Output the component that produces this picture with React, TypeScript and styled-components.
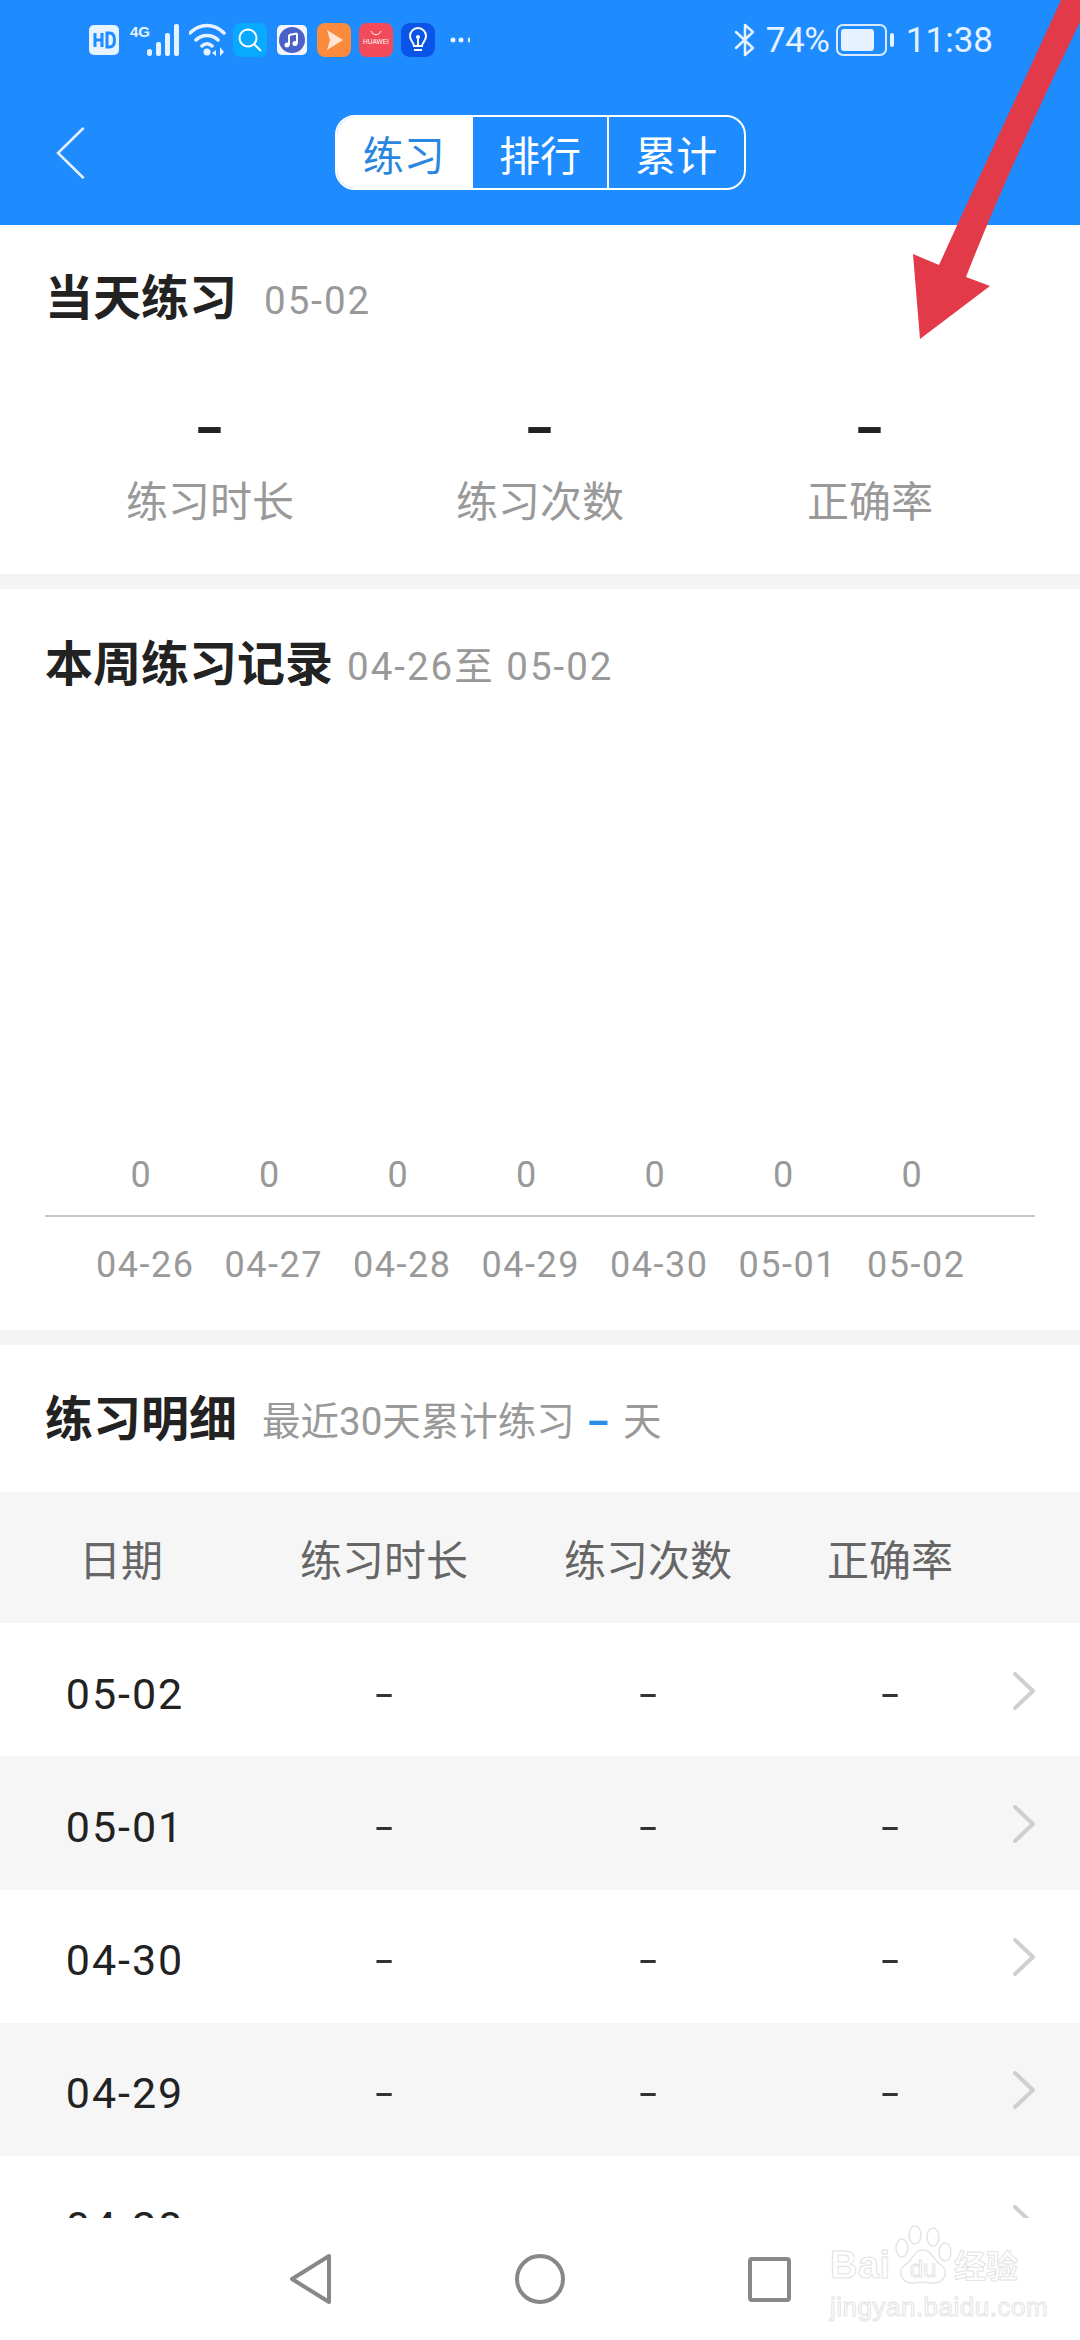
import { createGlobalStyle, styled } from 'styled-components'

const FONT = `Roboto, "Noto Sans CJK SC", sans-serif`

const GlobalStyle = createGlobalStyle`
  html, body {
    margin: 0;
    padding: 0;
    background: #fff;
  }
  * {
    box-sizing: border-box;
  }
`

const WEEK = [
  { date: '04-26', count: 0 },
  { date: '04-27', count: 0 },
  { date: '04-28', count: 0 },
  { date: '04-29', count: 0 },
  { date: '04-30', count: 0 },
  { date: '05-01', count: 0 },
  { date: '05-02', count: 0 },
]

const DETAIL_ROWS = ['05-02', '05-01', '04-30', '04-29', '04-28']

const StatusIcons = () => (
  <StatusLeft>
    <Glyph width="30" height="30" viewBox="0 0 30 30" $mr={11}>
      <rect width="30" height="30" rx="5" fill="#e6f2ff" />
      <path d="M6 8v14M13 8v14M6 15h7" stroke="#1e8cff" strokeWidth="3" fill="none" />
      <path d="M18 8v14h2.500c3.500 0 5-2.500 5-7s-1.500-7-5-7z" stroke="#1e8cff" strokeWidth="3" fill="none" />
    </Glyph>
    <Glyph width="50" height="34" viewBox="0 0 50 34" $mr={9}>
      <text x="0" y="14" fontFamily="'Liberation Sans Narrow', 'Liberation Sans', sans-serif" fontWeight="700" fontSize="15" fill="#e6f2ff">
        4G
      </text>
      <rect x="17" y="26" width="5" height="7" rx="2.500" fill="#e6f2ff" />
      <rect x="26" y="19" width="5" height="14" rx="2" fill="#e6f2ff" />
      <rect x="35" y="10" width="5" height="23" rx="2" fill="#e6f2ff" />
      <rect x="44" y="1" width="5" height="32" rx="2" fill="#e6f2ff" />
    </Glyph>
    <Glyph width="37" height="34" viewBox="0 0 37 34" $mr={7}>
      <path d="M1 10c10-10 24-10 34 0M7 17c6-6 16-6 22 0M13 23c3-3 7-3 10 0" stroke="#e6f2ff" strokeWidth="3.500" fill="none" strokeLinecap="round" />
      <circle cx="18" cy="29" r="3.500" fill="#e6f2ff" />
      <path d="M27 27l-4 3 4 3zM31 24v9l4-4z" fill="#e6f2ff" />
    </Glyph>
    <Glyph width="34" height="34" viewBox="0 0 34 34" $mr={10}>
      <rect width="34" height="34" rx="8" fill="#08aaff" />
      <circle cx="15" cy="15" r="8.500" stroke="#fff" strokeWidth="2" fill="none" />
      <path d="M21 21l7 7" stroke="#fff" strokeWidth="2" />
    </Glyph>
    <Glyph width="30" height="30" viewBox="0 0 30 30" $mr={10}>
      <rect width="30" height="30" rx="5" fill="#f4f6ff" />
      <circle cx="15" cy="15" r="13" fill="#4a62c8" />
      <path d="M12 10v10M20 8.500v10M12 10l8-1.500" stroke="#fff" strokeWidth="2" fill="none" />
      <circle cx="10" cy="20" r="2.500" fill="#fff" />
      <circle cx="18" cy="18.500" r="2.500" fill="#fff" />
    </Glyph>
    <Glyph width="34" height="34" viewBox="0 0 34 34" $mr={8}>
      <rect width="34" height="34" rx="8" fill="#fb8a3c" />
      <path d="M10 7l16 10-16 10 3-10z" fill="#ffe6d4" />
    </Glyph>
    <Glyph width="34" height="34" viewBox="0 0 34 34" $mr={8}>
      <rect width="34" height="34" rx="8" fill="#f24a58" />
      <path d="M12 8c2 5 8 5 10 0" stroke="#fff" strokeWidth="1" fill="none" />
      <text x="17" y="21" textAnchor="middle" fontFamily="'Liberation Sans', sans-serif" fontSize="6.500" fill="#fff">
        HUAWEI
      </text>
    </Glyph>
    <Glyph width="34" height="34" viewBox="0 0 34 34" $mr={15}>
      <rect width="34" height="34" rx="9" fill="#0a55e8" />
      <path d="M13 23c0-3-4-5-4-10a8 8 0 0 1 16 0c0 5-4 7-4 10z" stroke="#fff" strokeWidth="2" fill="none" />
      <path d="M17 23v-7M13 27h8" stroke="#fff" strokeWidth="2" fill="none" />
      <circle cx="17" cy="14" r="2" fill="#fff" />
    </Glyph>
    <Glyph width="20" height="8" viewBox="0 0 20 8" $mr={0}>
      <circle cx="3" cy="4" r="2.500" fill="#e6f2ff" />
      <circle cx="11" cy="4" r="2.500" fill="#e6f2ff" />
      <rect x="18" y="1.500" width="2" height="5" rx="1" fill="#e6f2ff" />
    </Glyph>
  </StatusLeft>
)

const StatusInfo = () => (
  <StatusRight>
    <Glyph width="22" height="34" viewBox="0 0 22 34" $mr={10}>
      <path d="M2 9l17 16-8 7V2l8 7L2 25" stroke="#e6f2ff" strokeWidth="2.500" fill="none" strokeLinejoin="round" strokeLinecap="round" />
    </Glyph>
    <BatteryText>74%</BatteryText>
    <Glyph width="58" height="32" viewBox="0 0 58 32" $mr={12}>
      <rect x="1" y="1" width="49" height="30" rx="6" stroke="#d8ebff" strokeWidth="2" fill="none" />
      <rect x="5" y="5" width="33" height="22" rx="3" fill="#e6f2ff" />
      <rect x="54" y="9" width="4" height="14" rx="2" fill="#e6f2ff" />
    </Glyph>
    <Clock>11:38</Clock>
  </StatusRight>
)

const Chevron = () => (
  <svg width="22" height="38" viewBox="0 0 22 38">
    <path d="M2 2l18 17L2 36" stroke="#cfcfcf" strokeWidth="4" fill="none" strokeLinecap="round" strokeLinejoin="round" />
  </svg>
)

export default function App() {
  return (
    <Page>
      <GlobalStyle />
      <Header>
        <StatusBar>
          <StatusIcons />
          <StatusInfo />
        </StatusBar>
        <TopBar>
          <BackIcon width="29" height="52" viewBox="0 0 29 52">
            <path d="M27 1.500L2 26l25 24.500" stroke="#e6f2ff" strokeWidth="2.500" fill="none" strokeLinecap="round" />
          </BackIcon>
          <Tabs>
            <Tab $active>练习</Tab>
            <Tab>排行</Tab>
            <Tab>累计</Tab>
          </Tabs>
        </TopBar>
      </Header>

      <Content>
        <Section $height={349}>
          <TitleRow $height={146} $gap={27}>
            <Title>当天练习</Title>
            <Sub $spacing={2} $drop={12}>
              05-02
            </Sub>
          </TitleRow>
          <Stats>
            <Stat>
              <StatValue>-</StatValue>
              <StatLabel>练习时长</StatLabel>
            </Stat>
            <Stat>
              <StatValue>-</StatValue>
              <StatLabel>练习次数</StatLabel>
            </Stat>
            <Stat>
              <StatValue>-</StatValue>
              <StatLabel>正确率</StatLabel>
            </Stat>
          </Stats>
        </Section>
        <Band />

        <Section $height={741}>
          <TitleRow $height={150} $gap={14}>
            <Title>本周练习记录</Title>
            <Sub $spacing={2} $drop={6}>
              04-26至 05-02
            </Sub>
          </TitleRow>
          <Chart>
            <ChartRow $left={77}>
              {WEEK.map((day) => (
                <ChartCell key={day.date}>{day.count}</ChartCell>
              ))}
            </ChartRow>
            <Axis />
            <ChartRow $left={81}>
              {WEEK.map((day) => (
                <ChartCell key={day.date}>{day.date}</ChartCell>
              ))}
            </ChartRow>
          </Chart>
        </Section>
        <Band />

        <Section>
          <TitleRow $height={147} $gap={25}>
            <Title>练习明细</Title>
            <Sub $drop={6}>
              最近30天累计练习 <Accent>-</Accent> 天
            </Sub>
          </TitleRow>
          <TableHead>
            <HeadCell $shift={-8}>日期</HeadCell>
            <HeadCell>练习时长</HeadCell>
            <HeadCell>练习次数</HeadCell>
            <HeadCell>正确率</HeadCell>
          </TableHead>
          {DETAIL_ROWS.map((date, index) => (
            <TableRow key={date} $striped={index % 2 === 1}>
              <DateCell>{date}</DateCell>
              <DashCell>-</DashCell>
              <DashCell>-</DashCell>
              <DashCell>-</DashCell>
              <ArrowCell>
                <Chevron />
              </ArrowCell>
            </TableRow>
          ))}
        </Section>
      </Content>

      <NavBar>
        <svg width="42" height="52" viewBox="0 0 42 52">
          <path d="M39 3L2 26l37 23z" stroke="#888" strokeWidth="4" fill="none" strokeLinejoin="round" />
        </svg>
        <svg width="50" height="50" viewBox="0 0 50 50">
          <circle cx="25" cy="25" r="23" stroke="#888" strokeWidth="4" fill="none" />
        </svg>
        <svg width="43" height="45" viewBox="0 0 43 45">
          <rect x="2" y="2" width="39" height="41" rx="2" stroke="#888" strokeWidth="4" fill="none" />
        </svg>
      </NavBar>

      <ArrowOverlay width="1080" height="350" viewBox="0 0 1080 350">
        <path
          d="M1061 0C1020 90 980 175 939 265L913 254 920 339 990 286 966 277C1000 190 1040 105 1080 22V0z"
          fill="#e23a48"
        />
      </ArrowOverlay>

      <Watermark>
        <BrandLine>
          <BrandWord>Bai</BrandWord>
          <PawIcon width="62" height="60" viewBox="0 0 62 60">
            <g stroke="#e4e4e4" strokeWidth="1.500" fill="none">
              <ellipse cx="23" cy="10" rx="6" ry="9" />
              <ellipse cx="41" cy="12" rx="6" ry="9" />
              <ellipse cx="10" cy="23" rx="6" ry="9" />
              <ellipse cx="53" cy="27" rx="6" ry="9" />
              <path d="M31 25c9 0 10 10 18 15 9 6 3 19-9 18-6 0-12-2-18 0C10 59 4 46 13 40c8-5 9-15 18-15z" />
            </g>
            <PawText x="31" y="52" textAnchor="middle">
              du
            </PawText>
          </PawIcon>
          <BrandCn>经验</BrandCn>
        </BrandLine>
        <BrandUrl>jingyan.baidu.com</BrandUrl>
      </Watermark>
    </Page>
  )
}

const Page = styled.div`
  position: relative;
  width: 1080px;
  height: 2340px;
  display: flex;
  flex-direction: column;
  overflow: hidden;
  background: #fff;
  font-family: ${FONT};
`

const Header = styled.header`
  height: 225px;
  flex-shrink: 0;
  background: #1e8cff;
  display: flex;
  flex-direction: column;
`

const StatusBar = styled.div`
  height: 80px;
  padding: 0 87px 0 89px;
  display: flex;
  align-items: center;
  justify-content: space-between;
`

const StatusLeft = styled.div`
  display: flex;
  align-items: center;
`

const StatusRight = styled.div`
  display: flex;
  align-items: center;
  color: #e6f2ff;
`

const Glyph = styled.svg<{ $mr: number }>`
  flex-shrink: 0;
  margin-right: ${(props) => props.$mr}px;
`

const BatteryText = styled.span`
  font-size: 35px;
  width: 70px;
  letter-spacing: -0.5px;
`

const Clock = styled.span`
  font-size: 35px;
`

const TopBar = styled.div`
  position: relative;
  height: 110px;
  padding-top: 35px;
  display: flex;
  justify-content: center;
  align-items: flex-start;
`

const BackIcon = styled.svg`
  position: absolute;
  left: 56px;
  top: 47px;
`

const Tabs = styled.div`
  width: 411px;
  height: 75px;
  display: flex;
  border: 2px solid #fff;
  border-radius: 20px;
  overflow: hidden;
`

const Tab = styled.div<{ $active?: boolean }>`
  flex: 1;
  display: flex;
  align-items: center;
  justify-content: center;
  font-size: 41px;
  color: ${(props) => (props.$active ? '#2a86e0' : '#fff')};
  background: ${(props) => (props.$active ? '#fff' : 'transparent')};

  & + & {
    border-left: 2px solid #fff;
  }
`

const Content = styled.main`
  flex: 1;
  min-height: 0;
  overflow: hidden;
`

const Section = styled.section<{ $height?: number }>`
  display: flex;
  flex-direction: column;
  height: ${(props) => (props.$height ? `${props.$height}px` : 'auto')};
  background: #fff;
`

const Band = styled.div`
  height: 15px;
  background: #f4f4f4;
`

const TitleRow = styled.div<{ $height: number; $gap: number }>`
  height: ${(props) => props.$height}px;
  padding: 0 0 8px 45px;
  display: flex;
  align-items: center;
  gap: ${(props) => props.$gap}px;
  flex-shrink: 0;
`

const Title = styled.h2`
  margin: 0;
  font-size: 48px;
  font-weight: 700;
  color: #222;
`

const Sub = styled.span<{ $spacing?: number; $drop?: number }>`
  margin-top: ${(props) => props.$drop ?? 0}px;
  font-size: 38.500px;
  letter-spacing: ${(props) => props.$spacing ?? 0}px;
  color: #999;
`

const Accent = styled.b`
  display: inline-block;
  margin: 0 7px;
  transform: scaleX(1.7);
  color: #2a8ee8;
`

const Stats = styled.div`
  padding: 0 45px;
  display: grid;
  grid-template-columns: repeat(3, 1fr);
`

const Stat = styled.div`
  display: flex;
  flex-direction: column;
  align-items: center;
  padding-top: 27px;
`

const StatValue = styled.div`
  height: 60px;
  line-height: 60px;
  font-size: 54px;
  font-weight: 700;
  color: #222;
  transform: scaleX(1.5);
`

const StatLabel = styled.div`
  margin-top: 15px;
  height: 60px;
  line-height: 60px;
  font-size: 42px;
  color: #999;
`

const Chart = styled.div`
  margin-top: auto;
  padding-bottom: 41px;
`

const ChartRow = styled.div<{ $left: number }>`
  height: 50px;
  padding-left: ${(props) => props.$left}px;
  display: grid;
  grid-template-columns: repeat(7, 128.500px);
`

const ChartCell = styled.div`
  text-align: center;
  line-height: 52px;
  font-size: 36px;
  letter-spacing: 1.500px;
  color: #999;
`

const Axis = styled.div`
  height: 2px;
  margin: 16px 45px 22px;
  background: #c8c8c8;
`

const TableGrid = styled.div`
  display: grid;
  grid-template-columns: 250px 268px 260px 224px 78px;
  align-items: center;
`

const TableHead = styled(TableGrid)`
  height: 131px;
  background: #f6f6f6;
`

const HeadCell = styled.div<{ $shift?: number }>`
  text-align: center;
  font-size: 42px;
  color: #666;
  padding-right: ${(props) => (props.$shift ? -props.$shift : 0)}px;
`

const TableRow = styled(TableGrid)<{ $striped: boolean }>`
  height: 133.250px;
  background: ${(props) => (props.$striped ? '#f6f6f6' : '#fff')};
`

const DateCell = styled.div`
  padding-top: 8px;
  text-align: center;
  font-size: 43px;
  letter-spacing: 2px;
  color: #222;
`

const DashCell = styled.div`
  padding-top: 9px;
  text-align: center;
  font-size: 40px;
  color: #333;
  transform: scaleX(1.6);
`

const ArrowCell = styled.div`
  display: flex;
  padding: 2px 0 0 11px;
`

const NavBar = styled.nav`
  height: 122px;
  flex-shrink: 0;
  background: #fff;
  display: flex;
  align-items: center;
  justify-content: center;
  gap: 183px;
`

const ArrowOverlay = styled.svg`
  position: absolute;
  top: 0;
  left: 0;
  pointer-events: none;
`

const Watermark = styled.div`
  position: absolute;
  left: 830px;
  top: 2225px;
  width: 192px;
  font-family: 'Liberation Sans', 'Noto Sans CJK SC', sans-serif;
  color: transparent;
  -webkit-text-stroke: 1px #e4e4e4;
`

const BrandLine = styled.div`
  display: flex;
  align-items: flex-end;
  height: 60px;
`

const BrandWord = styled.span`
  width: 62px;
  font-size: 38px;
  line-height: 40px;
  font-weight: 700;
  letter-spacing: 0.5px;
`

const PawIcon = styled.svg`
  flex-shrink: 0;
`

const PawText = styled.text`
  font-size: 24px;
  fill: transparent;
  stroke: #e4e4e4;
  stroke-width: 1px;
`

const BrandCn = styled.span`
  font-size: 32px;
  line-height: 36px;
  font-weight: 700;
  white-space: nowrap;
`

const BrandUrl = styled.div`
  margin-top: 8px;
  font-size: 26px;
  line-height: 28px;
  letter-spacing: 0.5px;
  white-space: nowrap;
`
